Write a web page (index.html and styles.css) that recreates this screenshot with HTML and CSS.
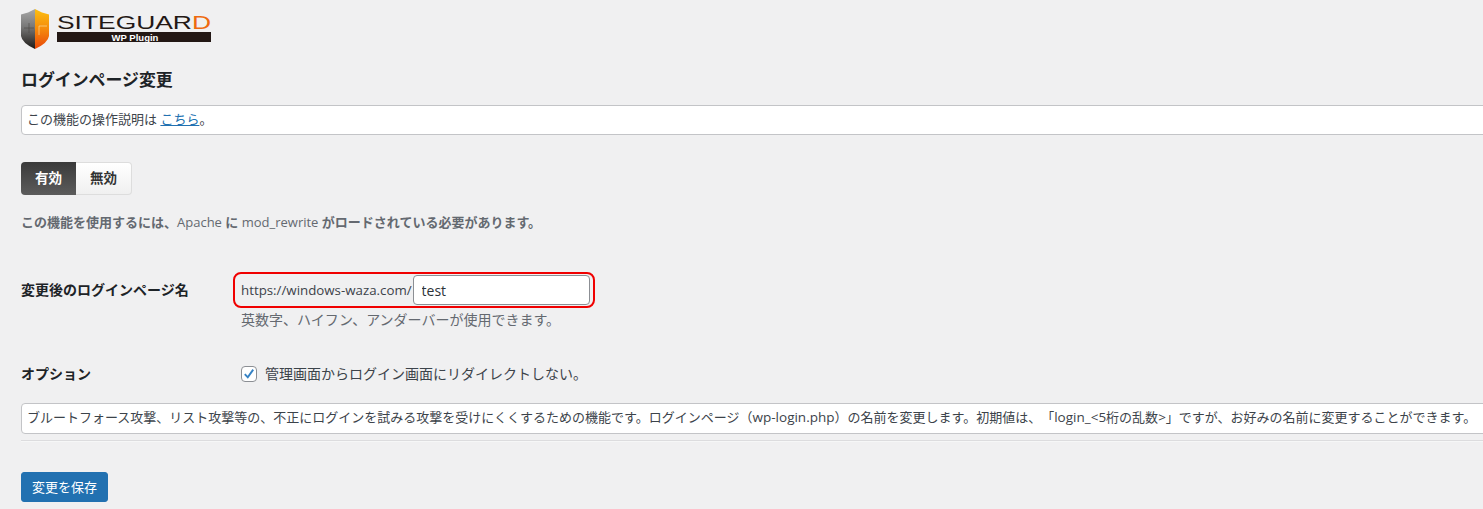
FILE: index.html
```html
<!DOCTYPE html>
<html lang="ja">
<head>
<meta charset="utf-8">
<title>ログインページ変更</title>
<link rel="stylesheet" href="styles.css">
</head>
<body>
<div class="wrap">
  <svg class="logo" width="192" height="42" viewBox="0 0 192 42" aria-label="SITEGUARD WP Plugin">
    <defs>
      <linearGradient id="sg-left" x1="0" y1="0" x2="0" y2="1">
        <stop offset="0" stop-color="#a8a8a8"/><stop offset="0.45" stop-color="#777"/><stop offset="1" stop-color="#1d1a18"/>
      </linearGradient>
      <linearGradient id="sg-right" x1="0" y1="0" x2="0" y2="1">
        <stop offset="0" stop-color="#fcc010"/><stop offset="0.5" stop-color="#f58a0c"/><stop offset="1" stop-color="#e8470a"/>
      </linearGradient>
    </defs>
    <path d="M14 0 L7 3.5 L0 5.5 V27 Q1 34 14 40 Z" fill="url(#sg-left)"/>
    <path d="M14 0 L21 3.5 L28 5.5 V27 Q27 34 14 40 Z" fill="url(#sg-right)"/>
    <path d="M3 19 H13 M8 14 V24" fill="none" stroke="#4a4643" stroke-width="0.6"/>
    <path d="M18 26 V17 H26" fill="none" stroke="#ffe6b0" stroke-width="0.6"/>
    <text x="36" y="20" class="logo-name" textLength="154" lengthAdjust="spacingAndGlyphs">SITEGUAR<tspan class="logo-d">D</tspan></text>
    <rect x="36" y="23" width="154" height="10" fill="#231815"/>
    <text x="114" y="31.5" class="logo-sub" text-anchor="middle">WP Plugin</text>
  </svg>

  <h2 class="title">ログインページ変更</h2>

  <p class="box box-top">この機能の操作説明は <a href="#">こちら</a>。</p>

  <div class="toggle">
    <span class="toggle-on">有効</span><span class="toggle-off">無効</span>
  </div>

  <p class="notice">この機能を使用するには、<span class="latin">Apache</span> に <span class="latin">mod_rewrite</span> がロードされている必要があります。</p>

  <div class="row row-name">
    <div class="label">変更後のログインページ名</div>
    <div class="field">
      <div class="highlight">
        <span class="prefix">https://windows-waza.com/</span><input class="text-input" type="text" value="test">
      </div>
      <p class="hint">英数字、ハイフン、アンダーバーが使用できます。</p>
    </div>
  </div>

  <div class="row row-option">
    <div class="label">オプション</div>
    <label class="check-label">
      <span class="check">
        <svg width="16" height="16" viewBox="0 0 16 16"><path d="M3.2 8.2 L6.6 11.8 L12.8 3" fill="none" stroke="#3582c4" stroke-width="2.2"/></svg>
      </span>
      管理画面からログイン画面にリダイレクトしない。
    </label>
  </div>

  <p class="box box-desc">ブルートフォース攻撃、リスト攻撃等の、不正にログインを試みる攻撃を受けにくくするための機能です。ログインページ（<span class="latin-wide">wp-login.php</span>）の名前を変更します。初期値は、「<span class="latin-wide">login_&lt;5</span>桁の乱数<span class="latin-wide">&gt;</span>」ですが、お好みの名前に変更することができます。</p>

  <hr class="rule">

  <button class="save" type="button">変更を保存</button>
</div>
</body>
</html>
```
FILE: styles.css
```css
html, body {
  margin: 0;
  padding: 0;
  height: 509px;
  overflow: hidden;
  background: #f0f0f1;
}
body {
  font-family: "Open Sans", "Noto Sans CJK JP", sans-serif;
  font-size: 13px;
  line-height: 19px;
  color: #3c434a;
  text-spacing-trim: space-all;
}
.wrap {
  width: 1500px;
  padding: 8px 0 0 21px;
}
.logo {
  display: block;
  margin-top: 1px;
}
.logo-name {
  font-family: "Liberation Sans", sans-serif;
  font-size: 18px;
  fill: #231815;
}
.logo-d { fill: #ee6a10; }
.logo-sub {
  font-family: "Liberation Sans", sans-serif;
  font-size: 9.5px;
  font-weight: 700;
  fill: #fff;
}
.title {
  margin: 17px 0 0;
  font-size: 16.9px;
  line-height: 23px;
  font-weight: 600;
  color: #1d2327;
}
.box {
  margin: 0;
  background: #fff;
  border: 1px solid #c3c4c7;
  border-radius: 4px;
  padding: 4px 5px;
  white-space: nowrap;
}
.box-top {
  margin-top: 14px;
  height: 20px;
}
.box-top a {
  color: #2271b1;
  text-decoration: underline;
}
.toggle {
  display: flex;
  width: 111px;
  height: 33px;
  margin-top: 27px;
  font-size: 13.5px;
  font-weight: 700;
  line-height: 31px;
  text-align: center;
}
.toggle-on {
  width: 55px;
  color: #fff;
  background: linear-gradient(#3a3a3a, #5c5c5c);
  border-radius: 4px 0 0 4px;
  line-height: 33px;
}
.toggle-off {
  flex: 1;
  color: #333;
  background: linear-gradient(#fff, #f0f0f0);
  border: 1px solid #ddd;
  border-left: 0;
  border-radius: 0 4px 4px 0;
}
.notice {
  margin: 18px 0 0;
  font-weight: 600;
  color: #646970;
}
.latin {
  font-weight: 400;
}
.latin-wide {
  font-size: 13.5px;
}
.row {
  display: flex;
}
.row-name {
  margin-top: 40px;
}
.label {
  width: 212px;
  font-size: 14px;
  font-weight: 600;
  color: #1d2327;
}
.row-name .label {
  padding-top: 8px;
}
.highlight {
  box-sizing: border-box;
  display: flex;
  align-items: center;
  width: 362px;
  height: 36px;
  padding: 0 3px 0 6px;
  border: 2px solid #f00000;
  border-radius: 8px;
}
.prefix {
  font-size: 13.3px;
  white-space: nowrap;
}
.text-input {
  box-sizing: border-box;
  width: 177px;
  height: 30px;
  margin-left: 1px;
  padding: 0 8px;
  font: inherit;
  font-size: 14px;
  color: #2c3338;
  background: #fff;
  border: 1px solid #8c8f94;
  border-radius: 4px;
}
.hint {
  margin: 2px 0 0 8px;
  font-size: 14px;
  color: #646970;
}
.row-option {
  margin-top: 35px;
  align-items: center;
}
.check-label {
  display: flex;
  align-items: center;
  margin-left: 8px;
  font-size: 14px;
}
.check {
  box-sizing: border-box;
  display: flex;
  width: 16px;
  height: 16px;
  margin-right: 8px;
  background: #fff;
  border: 1px solid #8c8f94;
  border-radius: 4px;
  align-items: center;
  justify-content: center;
}
.box-desc {
  margin-top: 20px;
  height: 21px;
}
.rule {
  margin: 6px 0 0;
  border: 0;
  border-top: 1px solid #dcdcde;
  border-bottom: 1px solid #f6f7f7;
}
.save {
  display: block;
  margin-top: 30px;
  width: 87px;
  height: 30px;
  padding: 0;
  font: inherit;
  color: #fff;
  background: #2271b1;
  border: 1px solid #2271b1;
  border-radius: 3px;
}
```
